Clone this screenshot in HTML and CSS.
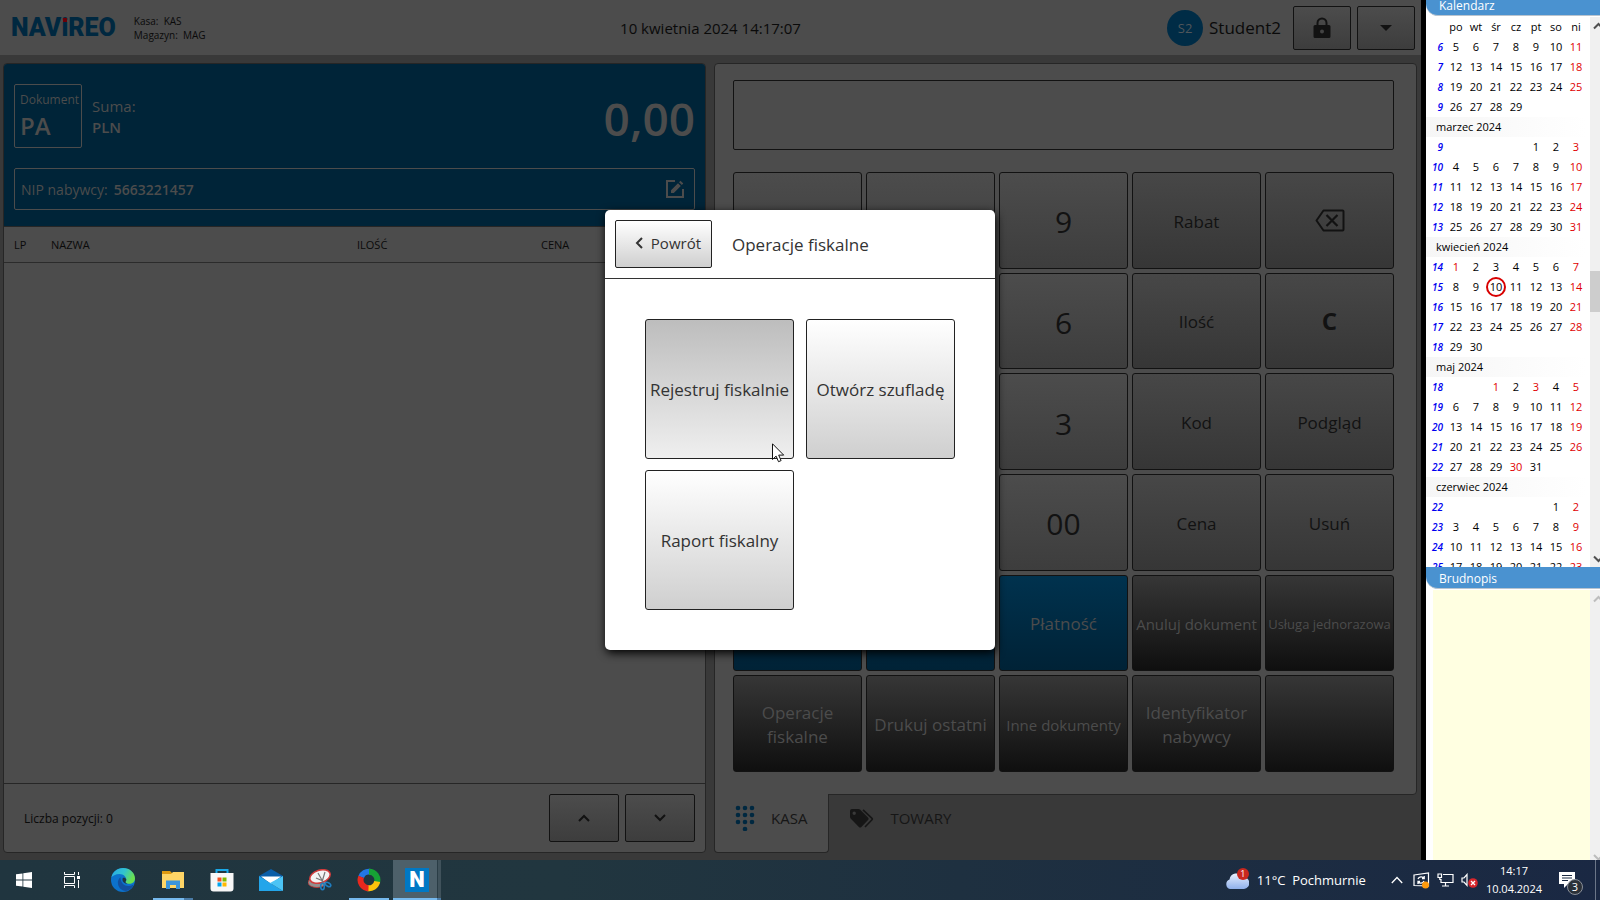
FILE: index.html
```html
<!DOCTYPE html>
<html lang="pl">
<head>
<meta charset="utf-8">
<title>Navireo – Operacje fiskalne</title>
<link rel="stylesheet" href="styles.css">
</head>
<body>
<div class="screen">
  <div class="desktop">
    <div class="app">
      <header class="topbar">
        <div class="brand">
          <div class="logo">NAV<span class="logo-i">i</span>REO</div>
          <div class="station"><div>Kasa:&nbsp; KAS</div><div>Magazyn:&nbsp; MAG</div></div>
        </div>
        <div class="clock">10 kwietnia 2024 14:17:07</div>
        <div class="user">
          <span class="avatar">S2</span>
          <span class="user-name">Student2</span>
          <button class="top-btn" type="button" aria-label="Zablokuj"><svg width="18" height="22" viewBox="0 0 18 22"><path fill="#121212" fill-rule="evenodd" d="M2 8h1.500V6a5.500 5.500 0 0 1 11 0v2H16a1.500 1.500 0 0 1 1.500 1.500v10A1.500 1.500 0 0 1 16 21H2a1.500 1.500 0 0 1-1.500-1.500v-10A1.500 1.500 0 0 1 2 8zm3.500 0h7V6a3.500 3.500 0 0 0-7 0zM9 12.500a2 2 0 1 0 0 4 2 2 0 0 0 0-4z"/></svg></button>
          <button class="top-btn" type="button" aria-label="Menu"><svg width="12" height="6" viewBox="0 0 12 6"><path fill="#121212" d="M0 0h12L6 6z"/></svg></button>
        </div>
      </header>

      <main class="work">
        <section class="panel receipt">
          <div class="summary">
            <div class="sum-row">
              <div class="doc"><span class="doc-label">Dokument</span><strong class="doc-type">PA</strong></div>
              <div class="currency"><span>Suma:</span><strong>PLN</strong></div>
              <div class="total">0,00</div>
            </div>
            <div class="nip">
              <span>NIP nabywcy:</span><strong>5663221457</strong>
              <svg class="edit" width="18" height="18" viewBox="0 0 18 18"><path fill="none" stroke="#4c4c4c" stroke-width="2" d="M9 1H1v16h16V9"/><path fill="#4c4c4c" d="M5 10.200 12 3.200 14.800 6 7.800 13H5zM13 2.200 14.500.7 17.300 3.500 15.800 5z"/></svg>
            </div>
          </div>
          <table class="items">
            <thead><tr><th class="c-lp">LP</th><th class="c-name">NAZWA</th><th class="c-qty">ILOŚĆ</th><th class="c-price">CENA</th></tr></thead>
            <tbody></tbody>
          </table>
          <div class="items-space"></div>
          <footer class="receipt-foot">
            <span class="count">Liczba pozycji: 0</span>
            <button class="nav-btn" type="button" aria-label="W górę"><svg width="12" height="8" viewBox="0 0 12 8"><path fill="none" stroke="#121212" stroke-width="2" d="M1 7l5-5 5 5"/></svg></button>
            <button class="nav-btn" type="button" aria-label="W dół"><svg width="12" height="8" viewBox="0 0 12 8"><path fill="none" stroke="#121212" stroke-width="2" d="M1 1l5 5 5-5"/></svg></button>
          </footer>
        </section>

        <section class="register">
          <div class="pad">
            <input class="display" type="text" aria-label="Wartość">
            <div class="keys">
              <button class="key" type="button"></button><button class="key" type="button"></button>
              <button class="key num" type="button">9</button><button class="key fn" type="button">Rabat</button>
              <button class="key fn icon" type="button" aria-label="Cofnij"><svg width="30" height="23" viewBox="0 0 30 23"><path fill="none" stroke="#121212" stroke-width="2" stroke-linejoin="round" d="M8.500 1.500h19a1 1 0 0 1 1 1v18a1 1 0 0 1-1 1h-19L1.500 11.500z"/><path stroke="#121212" stroke-width="2.200" d="M11.500 6l11 11M22.500 6l-11 11"/></svg></button>

              <button class="key" type="button"></button><button class="key" type="button"></button>
              <button class="key num" type="button">6</button><button class="key fn" type="button">Ilość</button><button class="key fn icon clear" type="button">C</button>

              <button class="key" type="button"></button><button class="key" type="button"></button>
              <button class="key num" type="button">3</button><button class="key fn" type="button">Kod</button><button class="key fn" type="button">Podgląd</button>

              <button class="key" type="button"></button><button class="key" type="button"></button>
              <button class="key num" type="button">00</button><button class="key fn" type="button">Cena</button><button class="key fn" type="button">Usuń</button>

              <button class="key blue" type="button"></button><button class="key blue" type="button"></button>
              <button class="key blue" type="button">Płatność</button><button class="key dark mid" type="button">Anuluj dokument</button><button class="key dark small" type="button">Usługa jednorazowa</button>

              <button class="key dark" type="button">Operacje fiskalne</button><button class="key dark" type="button">Drukuj ostatni</button>
              <button class="key dark mid" type="button">Inne dokumenty</button><button class="key dark" type="button">Identyfikator nabywcy</button><button class="key dark" type="button"></button>
            </div>
          </div>
          <nav class="tabs">
            <button class="tab active" type="button">
              <svg width="20" height="26" viewBox="0 0 20 26" fill="#002840"><circle cx="3" cy="3" r="2.300"/><circle cx="10" cy="3" r="2.300"/><circle cx="17" cy="3" r="2.300"/><circle cx="3" cy="10" r="2.300"/><circle cx="10" cy="10" r="2.300"/><circle cx="17" cy="10" r="2.300"/><circle cx="3" cy="17" r="2.300"/><circle cx="10" cy="17" r="2.300"/><circle cx="17" cy="17" r="2.300"/><circle cx="10" cy="24" r="2.300"/></svg>
              KASA</button>
            <button class="tab" type="button">
              <svg width="24" height="19" viewBox="0 0 24 19"><path fill="#161616" fill-rule="evenodd" d="M0 2a2 2 0 0 1 2-2h6.500l1.500.6 8 8a1.800 1.800 0 0 1 0 2.500l-6.600 6.800a1.800 1.800 0 0 1-2.500 0L.6 9.500 0 8zm4.200.6a1.700 1.700 0 1 0 0 3.400 1.700 1.700 0 0 0 0-3.400z"/><path fill="none" stroke="#161616" stroke-width="1.600" d="M13 .8l9 8.600a1 1 0 0 1 0 1.400L15 18"/></svg>
              TOWARY</button>
          </nav>
        </section>
      </main>
    </div>

    <aside class="side">
      <h2 class="side-title first">Kalendarz</h2>
      <div class="cal-wrap">
        <table class="cal">
          <thead><tr><th></th><th>po</th><th>wt</th><th>śr</th><th>cz</th><th>pt</th><th>so</th><th>ni</th></tr></thead>
          <tbody>
            <tr><th>6</th><td>5</td><td>6</td><td>7</td><td>8</td><td>9</td><td>10</td><td>11</td></tr>
            <tr><th>7</th><td>12</td><td>13</td><td>14</td><td>15</td><td>16</td><td>17</td><td>18</td></tr>
            <tr><th>8</th><td>19</td><td>20</td><td>21</td><td>22</td><td>23</td><td>24</td><td>25</td></tr>
            <tr><th>9</th><td>26</td><td>27</td><td>28</td><td>29</td><td></td><td></td><td></td></tr>
            <tr class="month"><td colspan="8">marzec 2024</td></tr>
            <tr><th>9</th><td></td><td></td><td></td><td></td><td>1</td><td>2</td><td>3</td></tr>
            <tr><th>10</th><td>4</td><td>5</td><td>6</td><td>7</td><td>8</td><td>9</td><td>10</td></tr>
            <tr><th>11</th><td>11</td><td>12</td><td>13</td><td>14</td><td>15</td><td>16</td><td>17</td></tr>
            <tr><th>12</th><td>18</td><td>19</td><td>20</td><td>21</td><td>22</td><td>23</td><td>24</td></tr>
            <tr><th>13</th><td>25</td><td>26</td><td>27</td><td>28</td><td>29</td><td>30</td><td>31</td></tr>
            <tr class="month"><td colspan="8">kwiecień 2024</td></tr>
            <tr><th>14</th><td class="free">1</td><td>2</td><td>3</td><td>4</td><td>5</td><td>6</td><td>7</td></tr>
            <tr><th>15</th><td>8</td><td>9</td><td class="today">10</td><td>11</td><td>12</td><td>13</td><td>14</td></tr>
            <tr><th>16</th><td>15</td><td>16</td><td>17</td><td>18</td><td>19</td><td>20</td><td>21</td></tr>
            <tr><th>17</th><td>22</td><td>23</td><td>24</td><td>25</td><td>26</td><td>27</td><td>28</td></tr>
            <tr><th>18</th><td>29</td><td>30</td><td></td><td></td><td></td><td></td><td></td></tr>
            <tr class="month"><td colspan="8">maj 2024</td></tr>
            <tr><th>18</th><td></td><td></td><td class="free">1</td><td>2</td><td class="free">3</td><td>4</td><td>5</td></tr>
            <tr><th>19</th><td>6</td><td>7</td><td>8</td><td>9</td><td>10</td><td>11</td><td>12</td></tr>
            <tr><th>20</th><td>13</td><td>14</td><td>15</td><td>16</td><td>17</td><td>18</td><td>19</td></tr>
            <tr><th>21</th><td>20</td><td>21</td><td>22</td><td>23</td><td>24</td><td>25</td><td>26</td></tr>
            <tr><th>22</th><td>27</td><td>28</td><td>29</td><td class="free">30</td><td>31</td><td></td><td></td></tr>
            <tr class="month"><td colspan="8">czerwiec 2024</td></tr>
            <tr><th>22</th><td></td><td></td><td></td><td></td><td></td><td>1</td><td>2</td></tr>
            <tr><th>23</th><td>3</td><td>4</td><td>5</td><td>6</td><td>7</td><td>8</td><td>9</td></tr>
            <tr><th>24</th><td>10</td><td>11</td><td>12</td><td>13</td><td>14</td><td>15</td><td>16</td></tr>
            <tr><th>25</th><td>17</td><td>18</td><td>19</td><td>20</td><td>21</td><td>22</td><td>23</td></tr>
          </tbody>
        </table>
        <div class="scroll">
          <svg width="10" height="17" viewBox="0 0 10 17"><path fill="none" stroke="#505050" stroke-width="2" d="M4 11.500l4.500-4.500 4.500 4.500"/></svg>
          <span class="track-a"></span><span class="thumb"></span><span class="track-b"></span>
          <svg width="10" height="17" viewBox="0 0 10 17"><path fill="none" stroke="#505050" stroke-width="2" d="M4 6.500l4.500 4.500 4.500-4.500"/></svg>
        </div>
      </div>
      <h2 class="side-title">Brudnopis</h2>
      <div class="notes-wrap">
        <textarea class="notes" aria-label="Brudnopis"></textarea>
        <div class="scroll">
          <svg width="10" height="17" viewBox="0 0 10 17"><path fill="none" stroke="#bdbdbd" stroke-width="2" d="M4 11.500l4.500-4.500 4.500 4.500"/></svg>
          <span class="track-b"></span>
          <svg width="10" height="17" viewBox="0 0 10 17"><path fill="none" stroke="#bdbdbd" stroke-width="2" d="M4 12l4.500 4.500L13 12"/></svg>
        </div>
      </div>
    </aside>

    <div class="overlay">
      <div class="dialog" role="dialog" aria-labelledby="dlg-title">
        <header class="dialog-head">
          <button class="back" type="button"><svg width="8" height="12" viewBox="0 0 8 12"><path fill="none" stroke="#333" stroke-width="2" d="M7 1L2 6l5 5"/></svg>Powrót</button>
          <h1 class="dialog-title" id="dlg-title">Operacje fiskalne</h1>
        </header>
        <div class="choices">
          <button class="choice pressed" type="button">Rejestruj fiskalnie</button>
          <button class="choice" type="button">Otwórz szufladę</button>
          <button class="choice" type="button">Raport fiskalny</button>
        </div>
        <svg class="cursor" width="13" height="20" viewBox="0 0 13 20"><path fill="#fff" stroke="#111" d="M.5.8v15.700l3.600-3.400 2.400 5.600 2.600-1.100-2.400-5.500h5z"/></svg>
      </div>
    </div>
  </div>

  <footer class="taskbar">
    <div class="apps">
      <button class="task" type="button" aria-label="Start"><svg width="16" height="16" viewBox="0 0 16 16" fill="#fff"><path d="M0 2.300L6.500 1.400V7.600H0zM7.300 1.300L16 0v7.600H7.300zM0 8.400h6.500v6.200L0 13.700zM7.300 8.400H16V16l-8.700-1.200z"/></svg></button>
      <button class="task" type="button" aria-label="Widok zadań"><svg width="16" height="16" viewBox="0 0 16 16"><path fill="none" stroke="#fff" d="M.5 0v2.500h10V0M.5 16v-2.500h10V16M.5 4.500h10v7H.5zM14.500 0v3M14.500 8v8"/><path fill="#fff" d="M13 4h3v3h-3z"/></svg></button>
      <button class="task edge" type="button" aria-label="Edge"><svg width="24" height="24" viewBox="0 0 24 24"><defs><linearGradient id="eg" x1="0" y1="0" x2="1" y2=".4"><stop offset="0" stop-color="#2aa8e8"/><stop offset=".55" stop-color="#31c4cf"/><stop offset="1" stop-color="#6ae04f"/></linearGradient></defs><circle cx="12" cy="12" r="12" fill="#0c72cc"/><path fill="url(#eg)" d="M.4 9.500C1.500 4 6.200 0 12 0c7 0 12 5 12 10.500 0 3.500-2.800 5.300-5.600 5.300-2.500 0-4-1-4-1.800 0-.6.900-.8.900-2.500C15.300 9 12.500 6 8.500 6 4.500 6 1.500 8 .4 9.500z"/><path fill="#124f9e" d="M9.500 9.300c-2 1.500-3 4-2.500 6.700.6 4 4 7 8 7 3.500-.8 6-3 7.500-5.500.3-.6-.2-.9-.8-.5-1.200.7-2.700 1-4.200 1-4.500 0-8-3-8-8.700z"/><path fill="#20353f" d="M11.800 10c1.200-.6 3 0 3.500 1.500 0 1.700-.9 1.900-.9 2.500 0 .8 1 1.500 2.500 1.800-3 .5-6.500-2.500-5.100-5.800z"/></svg></button>
      <button class="task run group" type="button" aria-label="Eksplorator plików"><svg width="22" height="20" viewBox="0 0 22 20"><path fill="#e09a10" d="M0 1h8l2 2v3H0z"/><path fill="#ffd566" d="M0 4h9l2-2h11v16H0z"/><path fill="#3b95dc" d="M4 19v-8.500h14V19h-4v-4H8v4z"/></svg></button>
      <button class="task app-btn" type="button" aria-label="Sklep"><svg width="24" height="24" viewBox="0 0 24 24"><path fill="none" stroke="#19a9e8" stroke-width="2" d="M6.500 6V2h11v4"/><path fill="#f7f7f7" d="M.5 5h23v15.500a3 3 0 0 1-3 3h-17a3 3 0 0 1-3-3z"/><path fill="#f25022" d="M7.500 9.500h4v4h-4z"/><path fill="#7fba00" d="M12.500 9.500h4v4h-4z"/><path fill="#00a4ef" d="M7.500 14.500h4v4h-4z"/><path fill="#ffb900" d="M12.500 14.500h4v4h-4z"/></svg></button>
      <button class="task app-btn" type="button" aria-label="Poczta"><svg width="24" height="22" viewBox="0 0 24 22"><path fill="#0a5ea8" d="M0 7L12 0l12 7v5H0z"/><path fill="#fff" d="M2 7.500h20L12 15z"/><path fill="#23a5ea" d="M0 7l24 15H0z"/><path fill="#4cc4f5" d="M24 7L11 14l13 8z"/></svg></button>
      <button class="task app-btn" type="button" aria-label="Narzędzie Wycinanie"><svg width="24" height="22" viewBox="0 0 24 22"><ellipse cx="9" cy="13.500" rx="9" ry="5" fill="#909090" stroke="#c33" stroke-width=".8"/><ellipse cx="12" cy="7.500" rx="10.500" ry="6.300" fill="#f3f3f3" stroke="#d23b3b" stroke-width="1.500" transform="rotate(-18 12 7.500)"/><path fill="none" stroke="#777" stroke-width="1.200" d="M10 4l5 9M17 3l-3 10M8 9l7 3"/><g fill="none" stroke="#1f7dbf" stroke-width="1.600"><ellipse cx="14.500" cy="17.500" rx="1.800" ry="3.200"/><ellipse cx="20" cy="15.500" rx="3" ry="1.800" transform="rotate(30 20 15.500)"/></g></svg></button>
      <button class="task app-btn run" type="button" aria-label="Przeglądarka"><svg width="24" height="24" viewBox="0 0 24 24" fill="none" stroke-width="6"><path stroke="#2376e5" d="M4.200 9A8.300 8.300 0 0 1 13 3.700"/><path stroke="#16a335" d="M12 3.700A8.300 8.300 0 0 1 19.800 15"/><path stroke="#fbc30b" d="M20.200 13.500A8.300 8.300 0 0 1 10 20"/><path stroke="#e8281e" d="M11.500 20.300A8.300 8.300 0 0 1 4.200 8.800"/></svg></button>
      <button class="task run current" type="button" aria-label="Navireo"><span class="n-icon">N</span></button>
    </div>
    <div class="tray">
      <svg width="24" height="22" viewBox="0 0 24 22"><defs><linearGradient id="cl" x1="0" y1="0" x2="0" y2="1"><stop offset="0" stop-color="#e8f0ff"/><stop offset="1" stop-color="#8fb0ea"/></linearGradient></defs><path fill="url(#cl)" d="M5 20a5 5 0 0 1-.5-9.500A7 7 0 0 1 17.500 8 6 6 0 0 1 19 20z"/></svg>
      <span class="badge">1</span>
      <span class="weather">11°C&nbsp; Pochmurnie</span>
      <svg width="12" height="8" viewBox="0 0 12 8"><path fill="none" stroke="#fff" stroke-width="1.300" d="M.8 7L6 1.500 11.200 7"/></svg>
      <svg class="gap-a" width="17" height="17" viewBox="0 0 17 17"><path fill="none" stroke="#fff" stroke-width="1.200" d="M1 3l14.500-2v13L1 13.500z"/><path fill="none" stroke="#fff" stroke-width="1.300" d="M5 7a3.500 3.500 0 0 1 6-.8M11.200 4v2.500H9M11 9a3.500 3.500 0 0 1-6 .8M5 12V9.500h2"/><circle cx="12.500" cy="13" r="3.500" fill="#ff9a0c"/></svg>
      <svg class="gap-b" width="17" height="14" viewBox="0 0 17 14"><path fill="none" stroke="#fff" stroke-width="1.200" d="M6 1.500h10v8H4V6M5 13h7M8.500 9.500V13M1 1h3.500v3.500H1zM2.800 4.500V7"/></svg>
      <svg class="gap-b" width="17" height="15" viewBox="0 0 17 15"><path fill="none" stroke="#fff" stroke-width="1.200" d="M1 5h2l3-3.500v11L3 9H1z"/><circle cx="12" cy="10" r="4.800" fill="#d8262c"/><path stroke="#fff" stroke-width="1.300" d="M10 8l4 4M14 8l-4 4"/></svg>
      <div class="datetime"><div>14:17</div><div>10.04.2024</div></div>
      <div class="notif"><svg width="17" height="17" viewBox="0 0 17 17"><path fill="#fff" d="M0 0h16v12H9l-4 4v-4H0z"/><path stroke="#1b2a42" stroke-width="1.200" d="M3 3.500h10M3 6h10M3 8.500h6"/></svg><span class="notif-count">3</span></div>
      <span class="peek"></span>
    </div>
  </footer>
</div>
</body>
</html>
```
FILE: styles.css
```css
* { box-sizing: border-box; }
body {
  margin: 0;
  background: #393939;
  color: #0a0a0a;
  font-family: "Open Sans", "Noto Sans", sans-serif;
  font-size: 15px;
}
button, input, textarea { font: inherit; color: inherit; margin: 0; }
button { padding: 0; }
svg { display: block; flex: none; }

.screen { display: flex; flex-direction: column; height: 100vh; overflow: hidden; }
.desktop { position: relative; flex: 1; min-height: 0; display: flex; }
.app { flex: 1; min-width: 0; display: flex; flex-direction: column; background: #393939; }

/* top bar */
.topbar {
  display: grid;
  grid-template-columns: 1fr auto 1fr;
  align-items: center;
  height: 55px;
  padding: 0 6px;
  background: #4c4c4c;
}
.brand { display: flex; align-items: center; gap: 18px; padding-left: 5px; }
.logo { font: 900 25px/30px Roboto, sans-serif; color: #002840; }
.logo-i { position: relative; }
.logo-i::after {
  content: "";
  position: absolute;
  left: 2px;
  top: 5px;
  width: 4px;
  height: 4px;
  background: #6b0008;
}
.station { font-size: 10px; line-height: 14px; }
.clock { font-size: 15px; }
.user { display: flex; align-items: center; justify-content: flex-end; gap: 6px; }
.avatar {
  width: 36px;
  height: 36px;
  border-radius: 50%;
  background: #002c46;
  color: #50565a;
  font-size: 13px;
  line-height: 36px;
  text-align: center;
}
.user-name { font-size: 17px; margin-right: 6px; }
.top-btn, .nav-btn {
  display: grid;
  place-items: center;
  border: 1px solid #121212;
  border-radius: 2px;
  background: linear-gradient(#4c4c4c, #3d3d3d);
}
.top-btn { width: 58px; height: 44px; }
.nav-btn { width: 70px; height: 48px; }

/* working area */
.work {
  flex: 1;
  min-height: 0;
  display: grid;
  grid-template-columns: 1fr 1fr;
  gap: 8px;
  padding: 8px 4px 7px 3px;
}
.panel { border: 1px solid #262626; border-radius: 4px; background: #4c4c4c; overflow: hidden; }
.receipt { display: flex; flex-direction: column; }
.summary { background: #002438; color: #4c4c4c; padding: 20px 10px 16px; border-bottom: 1px solid #262626; }
.sum-row { display: flex; align-items: center; gap: 10px; margin-bottom: 20px; }
.doc {
  display: flex;
  flex-direction: column;
  width: 68px;
  height: 64px;
  padding: 6px 5px;
  border: 1px solid #4c4c4c;
  border-radius: 2px;
}
.doc-label { font-size: 12px; line-height: 18px; }
.doc-type { font-size: 24px; line-height: 34px; font-weight: 600; }
.currency { display: flex; flex-direction: column; padding-top: 2px; font-size: 15px; line-height: 21px; }
.currency strong { font-weight: 600; }
.total { margin-left: auto; padding-top: 4px; font-size: 46px; line-height: 60px; font-weight: 600; }
.nip {
  display: flex;
  align-items: center;
  gap: 6px;
  height: 42px;
  padding: 0 10px 0 6px;
  border: 1px solid #4c4c4c;
  border-radius: 2px;
  font-size: 14px;
}
.nip strong { font-weight: 600; }
.edit { margin-left: auto; }
.items { width: 100%; table-layout: fixed; border-collapse: collapse; }
.items th {
  height: 35px;
  padding: 0 0 0 10px;
  border-bottom: 1px solid #2b2b2b;
  font-size: 11px;
  font-weight: 400;
  text-align: left;
}
.items .c-lp { width: 37px; }
.items .c-name { width: 306px; }
.items .c-qty { width: 184px; }
.items-space { flex: 1; }
.receipt-foot {
  display: flex;
  align-items: center;
  gap: 6px;
  height: 69px;
  padding: 0 10px 0 20px;
  border-top: 1px solid #262626;
}
.count { flex: 1; font-size: 12px; }

.register { display: flex; flex-direction: column; min-height: 0; }
.pad {
  flex: 1;
  min-height: 0;
  display: flex;
  flex-direction: column;
  gap: 22px;
  padding: 16px 22px 22px 18px;
  border: 1px solid #262626;
  border-radius: 4px 4px 4px 0;
  background: #4c4c4c;
}
.display { height: 70px; border: 1px solid #121212; border-radius: 2px; background: #4c4c4c; padding: 0 12px; }
.keys {
  flex: 1;
  min-height: 0;
  display: grid;
  grid-template-columns: repeat(5, minmax(0, 1fr));
  grid-template-rows: repeat(6, minmax(0, 1fr));
  gap: 4px;
}
.key {
  display: grid;
  place-items: center;
  padding: 3px 4px 0;
  border: 1px solid #121212;
  border-radius: 3px;
  background: linear-gradient(#4c4c4c, #3d3d3d);
  color: #121212;
  font-size: 17px;
  line-height: 24px;
}
.num { padding-top: 4px; font-size: 30px; line-height: 40px; }
.fn { background: linear-gradient(#474747, #363636); }
.icon { padding-top: 0; }
.clear { font-size: 24px; font-weight: 700; }
.blue { background: linear-gradient(#00324e, #002236); color: #4c4c4c; }
.dark { background: linear-gradient(#363636, #0f0f0f); color: #4c4c4c; }
.mid, .small { padding-left: 0; padding-right: 0; white-space: nowrap; }
.mid { font-size: 15px; }
.small { font-size: 13px; }

.tabs { display: flex; height: 59px; margin-top: -1px; }
.tab {
  display: flex;
  align-items: center;
  gap: 16px;
  padding: 0 21px 10px 20px;
  border: 1px solid transparent;
  border-top: 0;
  background: none;
  color: #161616;
  font-size: 15px;
}
.tab.active { border-color: #262626; border-radius: 0 0 4px 4px; background: #4c4c4c; }

/* side column */
.side {
  display: grid;
  grid-template-columns: minmax(0, 1fr);
  grid-template-rows: 16px minmax(0, 551fr) 22px minmax(0, 271fr);
  width: 179px;
  border-left: 5px solid #000;
  background: #fff;
  color: #000;
}
.side-title {
  margin: 0;
  padding-left: 13px;
  border-bottom: 1px solid #b9c4cf;
  border-bottom-left-radius: 12px;
  background: #4a92d0;
  color: #fff;
  font-size: 12px;
  font-weight: 400;
  line-height: 23px;
}
.side-title.first { line-height: 12px; }
.cal-wrap { display: flex; justify-content: space-between; overflow: hidden; padding-top: 1px; }
.cal { border-collapse: collapse; table-layout: fixed; width: 160px; height: 0; font-size: 11px; }
.cal tr { height: 20px; }
.cal th, .cal td { width: 20px; height: 20px; padding: 0; text-align: center; font-weight: 400; line-height: 20px; }
.cal tbody th { padding-right: 3px; color: #0000f0; font-style: italic; font-weight: 600; font-size: 10px; text-align: right; }
.cal td:nth-child(8), .cal .free { color: #e00000; }
.cal .month td { padding-left: 10px; text-align: left; background: linear-gradient(90deg, #f6f6f6, #fff); }
.cal .today { border-radius: 50%; box-shadow: inset 0 0 0 2px #d80000; }
.scroll { display: flex; flex-direction: column; flex: none; width: 10px; background: #f0f0f0; }
.track-a { flex: 237; }
.thumb { flex: 40; background: #cdcdcd; }
.track-b { flex: 238; }
.notes-wrap { display: flex; padding: 1px 0 0 7px; min-height: 0; }
.notes { flex: 1; min-width: 0; border: 0; padding: 4px; background: #ffffe1; resize: none; overflow: hidden; }

/* dialog */
.overlay { position: absolute; inset: 0; display: grid; place-items: center; }
.dialog {
  position: relative;
  width: 390px;
  border-radius: 5px;
  background: #fff;
  color: #333;
  box-shadow: 1px 3px 10px #000;
}
.dialog-head { display: flex; align-items: center; gap: 20px; padding: 10px; border-bottom: 1px solid #333; }
.back {
  display: flex;
  align-items: center;
  justify-content: flex-end;
  gap: 8px;
  width: 97px;
  height: 48px;
  padding: 0 10px 2px 0;
  border: 1px solid #222;
  border-radius: 2px;
  background: linear-gradient(#fff, #cfcfcf);
  font-size: 15px;
}
.dialog-title { margin: 0; font-size: 17px; font-weight: 400; }
.choices { display: grid; grid-template-columns: 1fr 1fr; grid-auto-rows: 140px; gap: 11px 12px; padding: 40px; }
.choice { border: 1px solid #222; border-radius: 3px; background: linear-gradient(#fff, #cfcfcf); font-size: 17px; white-space: nowrap; }
.pressed { background: linear-gradient(#bdbdbd, #efefef); }
.cursor { position: absolute; left: 167px; top: 233px; }

/* taskbar */
.taskbar {
  display: flex;
  justify-content: space-between;
  height: 40px;
  background: linear-gradient(90deg, #20353f, #21363f 35%, #1e3040 60%, #1a2843);
  color: #fff;
}
.apps { display: flex; }
.task { display: grid; place-items: center; width: 48px; border: 0; background: none; }
.task.edge { width: 53px; }
.task.app-btn { width: 49px; }
.task.run { background: linear-gradient(#76b9ed, #76b9ed) center bottom / 40px 2px no-repeat; }
.task.run.group { background: linear-gradient(90deg, #76b9ed 31px, #4a7ba6 31px) center bottom / 40px 2px no-repeat; }
.task.run.current {
  background:
    linear-gradient(90deg, #76b9ed 44px, #4a7ba6 44px) center bottom / 100% 2px no-repeat,
    linear-gradient(90deg, #4d606a 44px, #2a3d46 44px, #2a3d46 45px, #40525b 45px);
}
.n-icon { width: 24px; height: 24px; background: #0078c4; font: 900 22px/24px Roboto, sans-serif; text-align: center; }
.tray { display: flex; align-items: center; }
.badge {
  align-self: flex-start;
  width: 12px;
  height: 12px;
  margin: 8px 0 0 -12px;
  border-radius: 50%;
  background: #c8281e;
  font-size: 9px;
  line-height: 12px;
  text-align: center;
}
.weather { margin: 0 25px 0 8px; font-size: 13px; }
.gap-a { margin-left: 10px; }
.gap-b { margin-left: 7px; }
.datetime { margin: 0 17px 0 8px; font-size: 11px; line-height: 18px; text-align: center; }
.notif { position: relative; }
.notif-count {
  position: absolute;
  left: 8px;
  top: 7px;
  width: 16px;
  height: 16px;
  border: 1px solid #8a8f98;
  border-radius: 50%;
  background: #2b3138;
  font-size: 11px;
  line-height: 14px;
  text-align: center;
}
.peek { align-self: stretch; width: 5px; margin-left: 19px; border-left: 1px solid #6b7688; }
```
